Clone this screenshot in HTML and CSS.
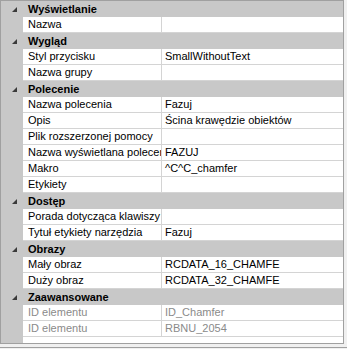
FILE: index.html
```html
<!DOCTYPE html>
<html lang="pl">
<head>
<meta charset="utf-8">
<title>Właściwości</title>
<link rel="stylesheet" href="styles.css">
</head>
<body>
<div class="grid">
  <div class="cat"><span class="arrow"></span><span class="cat-name">Wyświetlanie</span></div>
  <div class="row"><span class="gut"></span><span class="lbl">Nazwa</span><span class="val"></span></div>

  <div class="cat"><span class="arrow"></span><span class="cat-name">Wygląd</span></div>
  <div class="row"><span class="gut"></span><span class="lbl">Styl przycisku</span><span class="val">SmallWithoutText</span></div>
  <div class="row"><span class="gut"></span><span class="lbl">Nazwa grupy</span><span class="val"></span></div>

  <div class="cat"><span class="arrow"></span><span class="cat-name">Polecenie</span></div>
  <div class="row"><span class="gut"></span><span class="lbl">Nazwa polecenia</span><span class="val">Fazuj</span></div>
  <div class="row"><span class="gut"></span><span class="lbl">Opis</span><span class="val">Ścina krawędzie obiektów</span></div>
  <div class="row"><span class="gut"></span><span class="lbl">Plik rozszerzonej pomocy</span><span class="val"></span></div>
  <div class="row"><span class="gut"></span><span class="lbl"><span class="clip">Nazwa wyświetlana polecenia</span></span><span class="val">FAZUJ</span></div>
  <div class="row"><span class="gut"></span><span class="lbl">Makro</span><span class="val">^C^C_chamfer</span></div>
  <div class="row"><span class="gut"></span><span class="lbl">Etykiety</span><span class="val"></span></div>

  <div class="cat"><span class="arrow"></span><span class="cat-name">Dostęp</span></div>
  <div class="row"><span class="gut"></span><span class="lbl"><span class="clip">Porada dotycząca klawiszy</span></span><span class="val"></span></div>
  <div class="row"><span class="gut"></span><span class="lbl">Tytuł etykiety narzędzia</span><span class="val">Fazuj</span></div>

  <div class="cat"><span class="arrow"></span><span class="cat-name">Obrazy</span></div>
  <div class="row"><span class="gut"></span><span class="lbl">Mały obraz</span><span class="val">RCDATA_16_CHAMFE</span></div>
  <div class="row"><span class="gut"></span><span class="lbl">Duży obraz</span><span class="val">RCDATA_32_CHAMFE</span></div>

  <div class="cat"><span class="arrow"></span><span class="cat-name">Zaawansowane</span></div>
  <div class="row ro"><span class="gut"></span><span class="lbl">ID elementu</span><span class="val">ID_Chamfer</span></div>
  <div class="row ro"><span class="gut"></span><span class="lbl">ID elementu</span><span class="val">RBNU_2054</span></div>
  <div class="tail"><span class="gut"></span><span class="fill"></span></div>
</div>
<div class="below"></div>
</body>
</html>
```

FILE: styles.css
```css
html, body {
  margin: 0;
  padding: 0;
  background: #f0f0f0;
}

body {
  font-family: "Liberation Sans", Arial, sans-serif;
  font-size: 11px;
  color: #000;
}

.grid {
  width: 342px;
  border: 1px solid #a0a0a0;
  background: #fff;
  display: flex;
  flex-direction: column;
}

.cat {
  height: 16px;
  background: #c8c8c8;
  display: flex;
  align-items: center;
}

.arrow {
  width: 22px;
  height: 16px;
  position: relative;
  flex: none;
}

.arrow::after {
  content: "";
  position: absolute;
  left: 11px;
  top: 6px;
  width: 0;
  height: 0;
  border-style: solid;
  border-width: 0 0 5px 5px;
  border-color: transparent transparent #3a3a3a transparent;
}

.cat-name {
  font-weight: bold;
  padding-left: 5px;
  line-height: 16px;
  white-space: nowrap;
}

.row {
  height: 16px;
  display: flex;
}

.gut {
  width: 22px;
  flex: none;
  background: #c8c8c8;
}

.lbl {
  width: 139px;
  flex: none;
  box-sizing: border-box;
  padding-left: 5px;
  line-height: 15px;
  border-bottom: 1px solid #d4d4d4;
  border-right: 1px solid #d4d4d4;
  white-space: nowrap;
  overflow: hidden;
  text-overflow: clip;
}

.clip {
  display: block;
  overflow: hidden;
  white-space: nowrap;
}

.val {
  flex: 1;
  box-sizing: border-box;
  padding-left: 3px;
  line-height: 15px;
  border-bottom: 1px solid #d4d4d4;
  white-space: nowrap;
  overflow: hidden;
}

.ro .lbl,
.ro .val {
  color: #8a8a8a;
}

.tail {
  height: 6px;
  display: flex;
}

.tail .fill {
  flex: 1;
}

.below {
  margin-top: 3px;
  width: 347px;
  height: 1px;
  background: #a0a0a0;
}
```
